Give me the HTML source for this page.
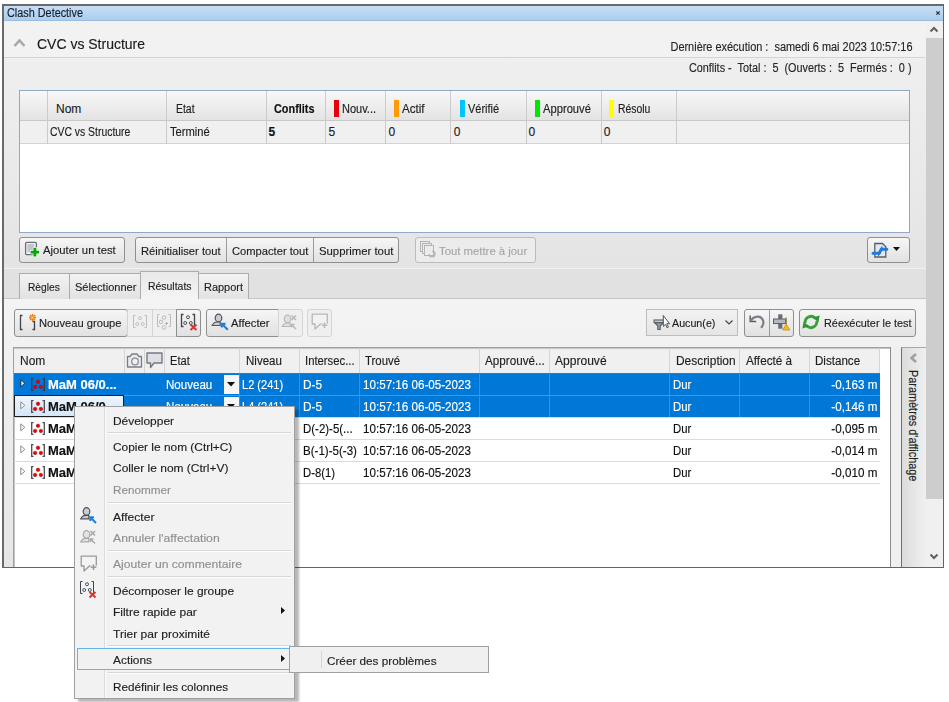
<!DOCTYPE html>
<html><head><meta charset='utf-8'><style>
*{margin:0;padding:0;box-sizing:border-box}
html,body{width:949px;height:702px;overflow:hidden;background:#fff}
body{position:relative;font-family:"Liberation Sans",sans-serif}
.b{position:absolute}
.t{position:absolute;white-space:pre;line-height:16px;font-family:"Liberation Sans",sans-serif;-webkit-text-stroke:0.15px currentColor}
svg{position:absolute;overflow:visible}
</style></head><body>
<div class="b" style="left:2px;top:4px;width:942px;height:564px;background:#f0f0f0;"></div>
<div class="b" style="left:3px;top:21px;width:923px;height:37px;background:#f2f2f2;"></div>
<div class="b" style="left:3px;top:58px;width:923px;height:210px;background:linear-gradient(#efefef,#e9e9e9 60%,#e4e4e4);"></div>
<div class="b" style="left:3px;top:5px;width:940px;height:16px;background:linear-gradient(#c9e0f6,#abcdef);border-bottom:1px solid #9cbcdd;"></div>
<div class="t" style="top:5.34px;font-size:12px;color:#151f2b;left:7.4px;transform:scaleX(0.9043);transform-origin:0 0;">Clash Detective</div>
<svg style="left:936px;top:11px" width="4" height="4" viewBox="0 0 4 4"><path d="M0.3 0.3L3.7 3.7M3.7 0.3L0.3 3.7" stroke="#333" stroke-width="1.2"/></svg>
<svg style="left:13px;top:37px" width="14" height="11" viewBox="0 0 14 11"><path d="M1.5 9L6.5 3.5L11.5 9" fill="none" stroke="#a8a8a8" stroke-width="2.6"/></svg>
<div class="t" style="top:35.80px;font-size:15px;color:#1a1a1a;left:37px;transform:scaleX(0.9320);transform-origin:0 0;">CVC vs Structure</div>
<div class="b" style="left:3px;top:57px;width:922px;height:1px;background:#d4d4d4;"></div>
<div class="t" style="top:38.64px;font-size:12px;color:#262626;left:646.50px;transform:scaleX(0.9115);transform-origin:100% 0;">Dernière exécution :  samedi 6 mai 2023 10:57:16</div>
<div class="t" style="top:59.64px;font-size:12px;color:#262626;left:665.48px;transform:scaleX(0.9030);transform-origin:100% 0;">Conflits -  Total :  5  (Ouverts :  5  Fermés :  0 )</div>
<div class="b" style="left:926px;top:21px;width:17px;height:546px;background:#f0f0f0;"></div>
<svg style="left:929px;top:25px" width="10" height="8" viewBox="0 0 10 8"><path d="M1.5 6.5L5 3L8.5 6.5" fill="none" stroke="#606060" stroke-width="2"/></svg>
<div class="b" style="left:926px;top:38px;width:17px;height:461px;background:#cdcdcd;"></div>
<svg style="left:929px;top:553px" width="10" height="8" viewBox="0 0 10 8"><path d="M1.5 1.5L5 5L8.5 1.5" fill="none" stroke="#606060" stroke-width="2"/></svg>
<div class="b" style="left:19px;top:90px;width:891px;height:143px;background:#fff;border:1px solid #8fa9c6;"></div>
<div class="b" style="left:20px;top:91px;width:889px;height:30px;background:linear-gradient(#f8f8f8,#e3e3e3);border-bottom:1px solid #c8c8c8;"></div>
<div class="b" style="left:20px;top:121px;width:889px;height:23px;background:#f0f0f0;border-bottom:1px solid #d4d4d4;"></div>
<div class="b" style="left:47px;top:91px;width:1px;height:53px;background:#cbcbcb;"></div>
<div class="b" style="left:166px;top:91px;width:1px;height:53px;background:#cbcbcb;"></div>
<div class="b" style="left:266px;top:91px;width:1px;height:53px;background:#cbcbcb;"></div>
<div class="b" style="left:325px;top:91px;width:1px;height:53px;background:#cbcbcb;"></div>
<div class="b" style="left:385px;top:91px;width:1px;height:53px;background:#cbcbcb;"></div>
<div class="b" style="left:450px;top:91px;width:1px;height:53px;background:#cbcbcb;"></div>
<div class="b" style="left:526px;top:91px;width:1px;height:53px;background:#cbcbcb;"></div>
<div class="b" style="left:601px;top:91px;width:1px;height:53px;background:#cbcbcb;"></div>
<div class="b" style="left:676px;top:91px;width:1px;height:53px;background:#cbcbcb;"></div>
<div class="t" style="top:100.84px;font-size:12px;color:#1e1e1e;left:56px;transform:scaleX(1.0000);transform-origin:0 0;">Nom</div>
<div class="t" style="top:100.84px;font-size:12px;color:#1e1e1e;left:175.5px;transform:scaleX(0.8708);transform-origin:0 0;">Etat</div>
<div class="t" style="top:100.84px;font-size:12px;color:#111;font-weight:700;left:274.3px;transform:scaleX(0.9066);transform-origin:0 0;">Conflits</div>
<div class="b" style="left:334px;top:100px;width:5px;height:17px;background:#e8000b;"></div>
<div class="t" style="top:100.84px;font-size:12px;color:#1e1e1e;left:342.3px;transform:scaleX(0.9158);transform-origin:0 0;">Nouv...</div>
<div class="b" style="left:394px;top:100px;width:5px;height:17px;background:#ff9b00;"></div>
<div class="t" style="top:100.84px;font-size:12px;color:#1e1e1e;left:402.3px;transform:scaleX(0.9681);transform-origin:0 0;">Actif</div>
<div class="b" style="left:459.7px;top:100px;width:5px;height:17px;background:#00c4ff;"></div>
<div class="t" style="top:100.84px;font-size:12px;color:#1e1e1e;left:468.0px;transform:scaleX(0.9113);transform-origin:0 0;">Vérifié</div>
<div class="b" style="left:534.5px;top:100px;width:5px;height:17px;background:#00e600;"></div>
<div class="t" style="top:100.84px;font-size:12px;color:#1e1e1e;left:542.8px;transform:scaleX(0.9324);transform-origin:0 0;">Approuvé</div>
<div class="b" style="left:609.4px;top:100px;width:5px;height:17px;background:#ffff00;"></div>
<div class="t" style="top:100.84px;font-size:12px;color:#1e1e1e;left:617.6999999999999px;transform:scaleX(0.8646);transform-origin:0 0;">Résolu</div>
<div class="t" style="top:123.84px;font-size:12px;color:#1e1e1e;left:50px;transform:scaleX(0.8662);transform-origin:0 0;">CVC vs Structure</div>
<div class="t" style="top:123.84px;font-size:12px;color:#1e1e1e;left:169.6px;transform:scaleX(0.9324);transform-origin:0 0;">Terminé</div>
<div class="t" style="top:123.84px;font-size:12px;color:#111;font-weight:700;left:268.6px;transform:scaleX(1.0000);transform-origin:0 0;">5</div>
<div class="t" style="top:123.84px;font-size:12px;color:#1e1e1e;left:328.5px;transform:scaleX(1.0000);transform-origin:0 0;">5</div>
<div class="t" style="top:123.84px;font-size:12px;color:#1e1e1e;left:388.4px;transform:scaleX(1.0000);transform-origin:0 0;">0</div>
<div class="t" style="top:123.84px;font-size:12px;color:#1e1e1e;left:453.8px;transform:scaleX(1.0000);transform-origin:0 0;">0</div>
<div class="t" style="top:123.84px;font-size:12px;color:#1e1e1e;left:528.6px;transform:scaleX(1.0000);transform-origin:0 0;">0</div>
<div class="t" style="top:123.84px;font-size:12px;color:#1e1e1e;left:603.7px;transform:scaleX(1.0000);transform-origin:0 0;">0</div>
<div class="b" style="left:19px;top:237px;width:106px;height:26px;background:linear-gradient(#f6f6f6,#e1e1e1);border:1px solid #8f8f8f;border-radius:3px;"></div>
<svg style="left:24px;top:241px" width="18" height="18" viewBox="0 0 18 18"><rect x="1.6" y="1.3" width="10.8" height="12.4" rx="1.2" fill="#eef0f4" stroke="#6a7078" stroke-width="1.3"/><path d="M3.5 4H10M3.5 6H10M3.5 8H9M3.5 10H7" stroke="#8a9098" stroke-width="0.9"/><path d="M10.9 6.3V15.9M6.1 11.1H15.7" stroke="#ffffff" stroke-width="4.2"/><path d="M10.9 6.8V15.4M6.6 11.1H15.2" stroke="#00a800" stroke-width="2.9"/></svg>
<div class="t" style="top:242.32px;font-size:11.5px;color:#1e1e1e;left:43px;transform:scaleX(0.9804);transform-origin:0 0;">Ajouter un test</div>
<div class="b" style="left:135px;top:237px;width:264px;height:26px;background:linear-gradient(#f6f6f6,#e1e1e1);border:1px solid #8f8f8f;border-radius:3px;"></div>
<div class="b" style="left:226px;top:238px;width:1px;height:24px;background:#9a9a9a;"></div>
<div class="b" style="left:313px;top:238px;width:1px;height:24px;background:#9a9a9a;"></div>
<div class="t" style="top:242.52px;font-size:11.5px;color:#1e1e1e;left:140.6px;transform:scaleX(0.9728);transform-origin:0 0;">Réinitialiser tout</div>
<div class="t" style="top:242.52px;font-size:11.5px;color:#1e1e1e;left:231.5px;transform:scaleX(0.9717);transform-origin:0 0;">Compacter tout</div>
<div class="t" style="top:242.52px;font-size:11.5px;color:#1e1e1e;left:319.1px;transform:scaleX(0.9862);transform-origin:0 0;">Supprimer tout</div>
<div class="b" style="left:415px;top:237px;width:121px;height:26px;background:#ececec;border:1px solid #bcbcbc;border-radius:3px;"></div>
<svg style="left:420px;top:241px" width="16" height="16" viewBox="0 0 16 16"><g fill="#ececec" stroke="#b4b4b4"><rect x="0.5" y="0.5" width="9" height="10"/><rect x="2.5" y="2.5" width="9" height="10"/><rect x="4.5" y="4.5" width="9" height="10"/></g><path d="M9 13a3 3 0 1 0 3-3" fill="none" stroke="#b0b0b0" stroke-width="1.2"/></svg>
<div class="t" style="top:242.52px;font-size:11.5px;color:#a6a6a6;left:439.4px;transform:scaleX(0.9856);transform-origin:0 0;">Tout mettre à jour</div>
<div class="b" style="left:867px;top:237px;width:43px;height:26px;background:linear-gradient(#f6f6f6,#e1e1e1);border:1px solid #8f8f8f;border-radius:3px;"></div>
<svg style="left:871px;top:242px" width="18" height="17" viewBox="0 0 18 17"><path d="M3.8 1.5H11.5L14.8 4.8V15H3.8Z" fill="#e4e8ee" stroke="#5a5e64" stroke-width="1.3"/><path d="M2 11.2H8L10.5 7.2H15.8" stroke="#1f7ae0" stroke-width="3" fill="none" stroke-linecap="round" stroke-linejoin="round"/><path d="M8.2 7.5L11.2 3.8L11.8 8.6Z M10.3 10.9L7.3 14.6L6.7 9.8Z" fill="#1f7ae0"/></svg>
<svg style="left:893px;top:247px" width="8" height="5" viewBox="0 0 8 5"><path d="M0 0H7L3.5 4Z" fill="#111"/></svg>
<div class="b" style="left:3px;top:268px;width:923px;height:31px;background:#e1e1e1;border-top:1px solid #f2f2f2;"></div>
<div class="b" style="left:3px;top:298px;width:923px;height:1px;background:#c6c6c6;"></div>
<div class="b" style="left:19px;top:273px;width:51px;height:26px;background:linear-gradient(#f2f2f2,#e2e2e2);border:1px solid #acacac;border-bottom:none;"></div>
<div class="b" style="left:69px;top:273px;width:72px;height:26px;background:linear-gradient(#f2f2f2,#e2e2e2);border:1px solid #acacac;border-bottom:none;"></div>
<div class="b" style="left:198px;top:273px;width:51px;height:26px;background:linear-gradient(#f2f2f2,#e2e2e2);border:1px solid #acacac;border-bottom:none;"></div>
<div class="b" style="left:140px;top:271px;width:59px;height:28px;background:linear-gradient(#e9e9e9,#f4f4f4);border:1px solid #acacac;border-bottom:none;"></div>
<div class="t" style="top:279.02px;font-size:11.5px;color:#1e1e1e;left:28px;transform:scaleX(0.8880);transform-origin:0 0;">Règles</div>
<div class="t" style="top:279.02px;font-size:11.5px;color:#1e1e1e;left:74.5px;transform:scaleX(0.9603);transform-origin:0 0;">Sélectionner</div>
<div class="t" style="top:278.02px;font-size:11.5px;color:#1e1e1e;left:148.3px;transform:scaleX(0.9074);transform-origin:0 0;">Résultats</div>
<div class="t" style="top:279.02px;font-size:11.5px;color:#1e1e1e;left:203.6px;transform:scaleX(0.9530);transform-origin:0 0;">Rapport</div>
<div class="b" style="left:3px;top:299px;width:923px;height:268px;background:linear-gradient(#f4f4f4,#ececec 50%,#e6e6e6);"></div>
<div class="b" style="left:14px;top:309px;width:114px;height:28px;background:linear-gradient(#f6f6f6,#e1e1e1);border:1px solid #8f8f8f;border-radius:3px;"></div>
<svg style="left:19px;top:313px" width="18" height="19" viewBox="0 0 18 19"><path d="M3.5 2.5H1.5V16.5H3.5" fill="none" stroke="#3c4450" stroke-width="1.3"/><path d="M13.5 8.5H15.5V16.5H13.5" fill="none" stroke="#3c4450" stroke-width="1.3"/><g stroke="#f07818" stroke-width="1.4"><path d="M13.5 1V8M10 4.5H17M11 2L16 7M16 2L11 7"/></g><circle cx="13.5" cy="4.5" r="1.3" fill="#ffd040"/></svg>
<div class="t" style="top:315.02px;font-size:11.5px;color:#1e1e1e;left:39.1px;transform:scaleX(0.9701);transform-origin:0 0;">Nouveau groupe</div>
<div class="b" style="left:127px;top:309px;width:26px;height:28px;background:#efefef;border:1px solid #d4d4d4;"></div>
<div class="b" style="left:152px;top:309px;width:25px;height:28px;background:#efefef;border:1px solid #d4d4d4;"></div>
<svg style="left:133px;top:315px" width="14" height="13" viewBox="0 0 14 13"><path d="M2.5 0.5H0.5V12.5H2.5M11.5 0.5H13.5V12.5H11.5" fill="none" stroke="#bdbdbd"/><g fill="none" stroke="#bdbdbd" stroke-width="0.9"><circle cx="7" cy="3.2" r="1.5"/><circle cx="4.2" cy="9" r="1.5"/><circle cx="9.8" cy="9" r="1.5"/></g></svg>
<svg style="left:157px;top:314px" width="14" height="16" viewBox="0 0 14 16"><path d="M2.5 0.5H0.5V12.5H2.5M11.5 0.5H13.5V12.5H11.5" fill="none" stroke="#bdbdbd"/><g fill="none" stroke="#bdbdbd"><circle cx="7" cy="3.5" r="1.8"/><circle cx="4" cy="8" r="1.8"/><circle cx="7" cy="13.5" r="1.8"/></g><path d="M9.5 8V11M8 9.5H11" stroke="#b0b0b0"/></svg>
<div class="b" style="left:176px;top:309px;width:25px;height:28px;background:linear-gradient(#f6f6f6,#e1e1e1);border:1px solid #8f8f8f;border-radius:3px;border-radius:0 3px 3px 0;"></div>
<svg style="left:181px;top:314px" width="17" height="17" viewBox="0 0 17 17"><path d="M2.5 0.5H0.5V12.5H2.5M11.5 0.5H13.5V12.5H11.5" fill="none" stroke="#3c4450" stroke-width="1.3"/><g fill="none" stroke="#3c4450" stroke-width="0.9"><circle cx="7" cy="3.2" r="1.5"/><circle cx="4.2" cy="9" r="1.5"/><circle cx="9.8" cy="9" r="1.5"/></g><path d="M9.5 10.5L15.5 16M15.5 10.5L9.5 16" stroke="#e03030" stroke-width="2"/></svg>
<div class="b" style="left:206px;top:309px;width:73px;height:28px;background:linear-gradient(#f6f6f6,#e1e1e1);border:1px solid #8f8f8f;border-radius:3px;border-radius:3px 0 0 3px;"></div>
<svg style="left:211px;top:313px" width="19" height="18" viewBox="0 0 19 18"><ellipse cx="7.5" cy="5" rx="3.3" ry="3.8" fill="#c8ccd4" stroke="#50545c" stroke-width="1.2"/><path d="M1.2 12.5q1.5-3.5 5-3.5h3v3.5Z" fill="#c8ccd4" stroke="#50545c" stroke-width="1.2"/><path d="M10.8 14.5V10.8H14.5M10.8 10.8L16.8 16.8" fill="none" stroke="#2080e0" stroke-width="2.2"/></svg>
<div class="t" style="top:315.02px;font-size:11.5px;color:#1e1e1e;left:231.3px;transform:scaleX(0.9766);transform-origin:0 0;">Affecter</div>
<div class="b" style="left:278px;top:309px;width:25px;height:28px;background:#efefef;border:1px solid #d4d4d4;border-radius:0 3px 3px 0;"></div>
<svg style="left:281px;top:314px" width="18" height="18" viewBox="0 0 18 18"><ellipse cx="6.5" cy="5" rx="3.3" ry="3.8" fill="#e0e0e0" stroke="#b8b8b8" stroke-width="1.2"/><path d="M1.2 12.5q1.5-3.5 5-3.5h3v3.5Z" fill="#e0e0e0" stroke="#b8b8b8" stroke-width="1.2"/><path d="M10.5 1.5L15 6M15 1.5L10.5 6" stroke="#b8b8b8" stroke-width="1.6"/><path d="M10.5 13.5V10.5H13.5M10.5 10.5L15 15" fill="none" stroke="#b8b8b8" stroke-width="1.5"/></svg>
<div class="b" style="left:307px;top:309px;width:25px;height:28px;background:#efefef;border:1px solid #d4d4d4;border-radius:3px;"></div>
<svg style="left:311px;top:313px" width="18" height="18" viewBox="0 0 18 18"><path d="M1.2 1.2H16.3V11H9.5L4 16V11H1.2Z" fill="#f2f2f2" stroke="#b8b8b8" stroke-width="1.3" stroke-linejoin="round"/><path d="M13.5 9V15.5M10.2 12.2H16.8" stroke="#f3f3f3" stroke-width="3.5"/><path d="M13.5 9.5V15M10.7 12.2H16.3" stroke="#b8b8b8" stroke-width="1.6"/></svg>
<div class="b" style="left:646px;top:309px;width:92px;height:27px;background:linear-gradient(#f2f2f2,#e5e5e5);border:1px solid #bdbdbd;"></div>
<svg style="left:653px;top:315px" width="18" height="16" viewBox="0 0 18 16"><path d="M1.6 7.6H10.4L7.2 11V14.5H4.8V11Z" fill="#9ca2aa" stroke="#5a5e64" stroke-width="1.1" stroke-linejoin="round"/><rect x="1.1" y="5" width="9.8" height="2.6" fill="#c8ccd2" stroke="#5a5e64" stroke-width="1.1"/><path d="M10.3 0.5V11.3L12.5 9.3L14.1 12.8L15.4 12.1L13.8 8.7H16.6Z" fill="#fff" stroke="#404448" stroke-width="0.9" stroke-linejoin="round"/></svg>
<div class="t" style="top:315.02px;font-size:11.5px;color:#1e1e1e;left:672px;transform:scaleX(0.9299);transform-origin:0 0;">Aucun(e)</div>
<svg style="left:725px;top:320px" width="8" height="5" viewBox="0 0 8 5"><path d="M0.5 0.5L4 4L7.5 0.5" fill="none" stroke="#444" stroke-width="1.1"/></svg>
<div class="b" style="left:744px;top:309px;width:50px;height:28px;background:linear-gradient(#f6f6f6,#e1e1e1);border:1px solid #8f8f8f;border-radius:3px;"></div>
<div class="b" style="left:769px;top:310px;width:1px;height:26px;background:#9a9a9a;"></div>
<svg style="left:748px;top:313px" width="18" height="16" viewBox="0 0 18 16"><path d="M2.2 2.5V8.5H8.2" fill="none" stroke="#5a6068" stroke-width="1.5"/><path d="M2.6 8.2C5 3.2 12 2 14.6 6.5C16.2 9.5 15 13 13 14.8" fill="none" stroke="#787e86" stroke-width="2.2"/></svg>
<svg style="left:772px;top:313px" width="19" height="18" viewBox="0 0 19 18"><rect x="6.2" y="1.3" width="4.2" height="14.4" fill="#686e76"/><rect x="1.5" y="6" width="12" height="4.6" fill="#b4b8be" stroke="#585e66"/><path d="M14.2 4.5V11" stroke="#a08040" stroke-width="1.3"/><path d="M10.6 17L14.2 11L17.8 17Z" fill="#f2bc20" stroke="#c89000" stroke-width="0.8"/></svg>
<div class="b" style="left:799px;top:309px;width:117px;height:28px;background:linear-gradient(#f6f6f6,#e1e1e1);border:1px solid #8f8f8f;border-radius:3px;"></div>
<svg style="left:802px;top:314px" width="18" height="16" viewBox="0 0 18 16"><g fill="none" stroke="#38a038" stroke-width="2.8"><path d="M3.3 9A5.8 5.8 0 0 1 13.6 4.6"/><path d="M14.7 7A5.8 5.8 0 0 1 4.4 11.4"/></g><path d="M11 3.6L17.6 1.6L16.4 8.6Z M7 12.4L0.4 14.4L1.6 7.4Z" fill="#2e962e"/></svg>
<div class="t" style="top:315.02px;font-size:11.5px;color:#1e1e1e;left:824.2px;transform:scaleX(0.9440);transform-origin:0 0;">Réexécuter le test</div>
<div class="b" style="left:13px;top:347px;width:878px;height:221px;background:#fff;border-left:1px solid #a0a0a0;border-top:1px solid #a0a0a0;border-right:1px solid #8c8c8c;box-shadow:inset 1px 1px 0 #c4c4c4;"></div>
<div class="b" style="left:14px;top:348px;width:866px;height:25px;background:#f0f0f0;border-top:1px solid #c8c8c8;"></div>
<div class="b" style="left:124px;top:348px;width:1px;height:25px;background:#d5d5d5;"></div>
<div class="b" style="left:144px;top:348px;width:1px;height:25px;background:#d5d5d5;"></div>
<div class="b" style="left:164px;top:348px;width:1px;height:25px;background:#d5d5d5;"></div>
<div class="b" style="left:239px;top:348px;width:1px;height:25px;background:#d5d5d5;"></div>
<div class="b" style="left:299px;top:348px;width:1px;height:25px;background:#d5d5d5;"></div>
<div class="b" style="left:359px;top:348px;width:1px;height:25px;background:#d5d5d5;"></div>
<div class="b" style="left:479px;top:348px;width:1px;height:25px;background:#d5d5d5;"></div>
<div class="b" style="left:549px;top:348px;width:1px;height:25px;background:#d5d5d5;"></div>
<div class="b" style="left:669px;top:348px;width:1px;height:25px;background:#d5d5d5;"></div>
<div class="b" style="left:739px;top:348px;width:1px;height:25px;background:#d5d5d5;"></div>
<div class="b" style="left:809px;top:348px;width:1px;height:25px;background:#d5d5d5;"></div>
<div class="b" style="left:879px;top:348px;width:1px;height:25px;background:#d5d5d5;"></div>
<svg style="left:126px;top:352px" width="18" height="17" viewBox="0 0 18 17"><path d="M1.5 4.5H4L6 2H11L13 4.5H15.5V15H1.5Z" fill="#e8eaec" stroke="#7a7e84" stroke-width="1.3" stroke-linejoin="round"/><circle cx="9" cy="9.5" r="3.3" fill="#eef2f2" stroke="#8a8e94" stroke-width="1.3"/></svg>
<svg style="left:146px;top:352px" width="18" height="17" viewBox="0 0 18 17"><path d="M1 1H16V11H8L4.5 15.5V11H1Z" fill="#dde0e6" stroke="#75797f" stroke-width="1.4" stroke-linejoin="round"/></svg>
<div class="t" style="top:352.84px;font-size:12px;color:#1e1e1e;left:20.2px;transform:scaleX(0.9983);transform-origin:0 0;">Nom</div>
<div class="t" style="top:352.84px;font-size:12px;color:#1e1e1e;left:170.2px;transform:scaleX(0.9270);transform-origin:0 0;">Etat</div>
<div class="t" style="top:352.84px;font-size:12px;color:#1e1e1e;left:245.6px;transform:scaleX(0.9609);transform-origin:0 0;">Niveau</div>
<div class="t" style="top:352.84px;font-size:12px;color:#1e1e1e;left:305.3px;transform:scaleX(0.9414);transform-origin:0 0;">Intersec...</div>
<div class="t" style="top:352.84px;font-size:12px;color:#1e1e1e;left:365px;transform:scaleX(0.9483);transform-origin:0 0;">Trouvé</div>
<div class="t" style="top:352.84px;font-size:12px;color:#1e1e1e;left:485.4px;transform:scaleX(0.9727);transform-origin:0 0;">Approuvé...</div>
<div class="t" style="top:352.84px;font-size:12px;color:#1e1e1e;left:555.2px;transform:scaleX(1.0044);transform-origin:0 0;">Approuvé</div>
<div class="t" style="top:352.84px;font-size:12px;color:#1e1e1e;left:675.5px;transform:scaleX(0.9928);transform-origin:0 0;">Description</div>
<div class="t" style="top:352.84px;font-size:12px;color:#1e1e1e;left:745.5px;transform:scaleX(0.9776);transform-origin:0 0;">Affecté à</div>
<div class="t" style="top:352.84px;font-size:12px;color:#1e1e1e;left:815.1px;transform:scaleX(0.9660);transform-origin:0 0;">Distance</div>
<div class="b" style="left:14px;top:373px;width:866px;height:22px;background:#0078d7;"></div>
<div class="b" style="left:239px;top:373px;width:1px;height:22px;background:#3393df;"></div>
<div class="b" style="left:299px;top:373px;width:1px;height:22px;background:#3393df;"></div>
<div class="b" style="left:359px;top:373px;width:1px;height:22px;background:#3393df;"></div>
<div class="b" style="left:479px;top:373px;width:1px;height:22px;background:#3393df;"></div>
<div class="b" style="left:549px;top:373px;width:1px;height:22px;background:#3393df;"></div>
<div class="b" style="left:669px;top:373px;width:1px;height:22px;background:#3393df;"></div>
<div class="b" style="left:739px;top:373px;width:1px;height:22px;background:#3393df;"></div>
<div class="b" style="left:809px;top:373px;width:1px;height:22px;background:#3393df;"></div>
<div class="b" style="left:14px;top:373px;width:866px;height:1px;background:#3d76b0;"></div>
<svg style="left:20px;top:379px" width="6" height="9" viewBox="0 0 6 9"><path d="M0.9 0.6V7.9L4.6 4.25Z" fill="#fafafa" stroke="#1a1a1a" stroke-width="0.9" stroke-linejoin="round"/></svg>
<svg style="left:31px;top:378px" width="14" height="13" viewBox="0 0 14 13"><path d="M2.5 0.7H0.7V12.3H2.5M11.5 0.7H13.3V12.3H11.5" fill="none" stroke="#2a3e56" stroke-width="1.3"/><g fill="#f00000" stroke="#a00000" stroke-width="0.5"><circle cx="7" cy="3.8" r="1.75"/><circle cx="4.1" cy="8.9" r="1.75"/><circle cx="9.9" cy="8.9" r="1.75"/></g></svg>
<div class="t" style="top:376.84px;font-size:12px;color:#fff;font-weight:700;left:48.4px;transform:scaleX(1.0827);transform-origin:0 0;">MaM 06/0...</div>
<div class="t" style="top:376.84px;font-size:12px;color:#fff;left:165.7px;transform:scaleX(0.9636);transform-origin:0 0;">Nouveau</div>
<div class="b" style="left:224px;top:375px;width:15px;height:19px;background:#f6f6f6;"></div>
<svg style="left:227px;top:382px" width="9" height="5" viewBox="0 0 9 5"><path d="M0 0H8L4 4.5Z" fill="#111"/></svg>
<div class="t" style="top:376.84px;font-size:12px;color:#fff;left:242.3px;transform:scaleX(0.9216);transform-origin:0 0;">L2 (241)</div>
<div class="t" style="top:376.84px;font-size:12px;color:#fff;left:302.6px;transform:scaleX(0.9822);transform-origin:0 0;">D-5</div>
<div class="t" style="top:376.84px;font-size:12px;color:#fff;left:363.2px;transform:scaleX(0.9692);transform-origin:0 0;">10:57:16 06-05-2023</div>
<div class="t" style="top:376.84px;font-size:12px;color:#fff;left:672.7px;transform:scaleX(0.9460);transform-origin:0 0;">Dur</div>
<div class="t" style="top:376.84px;font-size:12px;color:#fff;left:829.84px;transform:scaleX(0.9713);transform-origin:100% 0;">-0,163 m</div>
<div class="b" style="left:14px;top:395px;width:866px;height:22px;background:#0078d7;"></div>
<div class="b" style="left:239px;top:395px;width:1px;height:22px;background:#3393df;"></div>
<div class="b" style="left:299px;top:395px;width:1px;height:22px;background:#3393df;"></div>
<div class="b" style="left:359px;top:395px;width:1px;height:22px;background:#3393df;"></div>
<div class="b" style="left:479px;top:395px;width:1px;height:22px;background:#3393df;"></div>
<div class="b" style="left:549px;top:395px;width:1px;height:22px;background:#3393df;"></div>
<div class="b" style="left:669px;top:395px;width:1px;height:22px;background:#3393df;"></div>
<div class="b" style="left:739px;top:395px;width:1px;height:22px;background:#3393df;"></div>
<div class="b" style="left:809px;top:395px;width:1px;height:22px;background:#3393df;"></div>
<div class="b" style="left:14px;top:395px;width:866px;height:1px;background:#5a92c8;"></div>
<div class="b" style="left:14px;top:395px;width:110px;height:22px;background:linear-gradient(#eef5fc,#d3e6f8);border:1px solid #1c1c1c;"></div>
<svg style="left:20px;top:401px" width="6" height="9" viewBox="0 0 6 9"><path d="M0.8 0.8V7.8L4.8 4.3Z" fill="#fff" stroke="#8a8a8a" stroke-width="1"/></svg>
<svg style="left:31px;top:400px" width="14" height="13" viewBox="0 0 14 13"><path d="M2.5 0.7H0.7V12.3H2.5M11.5 0.7H13.3V12.3H11.5" fill="none" stroke="#4a4e56" stroke-width="1.3"/><g fill="#f00000" stroke="#a00000" stroke-width="0.5"><circle cx="7" cy="3.8" r="1.75"/><circle cx="4.1" cy="8.9" r="1.75"/><circle cx="9.9" cy="8.9" r="1.75"/></g></svg>
<div class="t" style="top:398.84px;font-size:12px;color:#111;font-weight:700;left:48.4px;transform:scaleX(1.0827);transform-origin:0 0;">MaM 06/0...</div>
<div class="t" style="top:398.84px;font-size:12px;color:#fff;left:165.7px;transform:scaleX(0.9636);transform-origin:0 0;">Nouveau</div>
<div class="b" style="left:224px;top:397px;width:15px;height:19px;background:#f6f6f6;"></div>
<svg style="left:227px;top:404px" width="9" height="5" viewBox="0 0 9 5"><path d="M0 0H8L4 4.5Z" fill="#111"/></svg>
<div class="t" style="top:398.84px;font-size:12px;color:#fff;left:242.3px;transform:scaleX(0.9216);transform-origin:0 0;">L4 (241)</div>
<div class="t" style="top:398.84px;font-size:12px;color:#fff;left:302.6px;transform:scaleX(0.9822);transform-origin:0 0;">D-5</div>
<div class="t" style="top:398.84px;font-size:12px;color:#fff;left:363.2px;transform:scaleX(0.9692);transform-origin:0 0;">10:57:16 06-05-2023</div>
<div class="t" style="top:398.84px;font-size:12px;color:#fff;left:672.7px;transform:scaleX(0.9460);transform-origin:0 0;">Dur</div>
<div class="t" style="top:398.84px;font-size:12px;color:#fff;left:829.84px;transform:scaleX(0.9713);transform-origin:100% 0;">-0,146 m</div>
<div class="b" style="left:14px;top:417px;width:866px;height:1px;background:#dcdcdc;"></div>
<svg style="left:20px;top:423px" width="6" height="9" viewBox="0 0 6 9"><path d="M0.8 0.8V7.8L4.8 4.3Z" fill="#fff" stroke="#8a8a8a" stroke-width="1"/></svg>
<svg style="left:31px;top:422px" width="14" height="13" viewBox="0 0 14 13"><path d="M2.5 0.7H0.7V12.3H2.5M11.5 0.7H13.3V12.3H11.5" fill="none" stroke="#4a4e56" stroke-width="1.3"/><g fill="#f00000" stroke="#a00000" stroke-width="0.5"><circle cx="7" cy="3.8" r="1.75"/><circle cx="4.1" cy="8.9" r="1.75"/><circle cx="9.9" cy="8.9" r="1.75"/></g></svg>
<div class="t" style="top:420.84px;font-size:12px;color:#111;font-weight:700;left:48.4px;transform:scaleX(1.0827);transform-origin:0 0;">MaM 06/0...</div>
<div class="t" style="top:420.84px;font-size:12px;color:#111;left:302.6px;transform:scaleX(0.9538);transform-origin:0 0;">D(-2)-5(...</div>
<div class="t" style="top:420.84px;font-size:12px;color:#111;left:363.2px;transform:scaleX(0.9692);transform-origin:0 0;">10:57:16 06-05-2023</div>
<div class="t" style="top:420.84px;font-size:12px;color:#111;left:672.7px;transform:scaleX(0.9460);transform-origin:0 0;">Dur</div>
<div class="t" style="top:420.84px;font-size:12px;color:#111;left:829.84px;transform:scaleX(0.9713);transform-origin:100% 0;">-0,095 m</div>
<div class="b" style="left:14px;top:439px;width:866px;height:1px;background:#dcdcdc;"></div>
<svg style="left:20px;top:445px" width="6" height="9" viewBox="0 0 6 9"><path d="M0.8 0.8V7.8L4.8 4.3Z" fill="#fff" stroke="#8a8a8a" stroke-width="1"/></svg>
<svg style="left:31px;top:444px" width="14" height="13" viewBox="0 0 14 13"><path d="M2.5 0.7H0.7V12.3H2.5M11.5 0.7H13.3V12.3H11.5" fill="none" stroke="#4a4e56" stroke-width="1.3"/><g fill="#f00000" stroke="#a00000" stroke-width="0.5"><circle cx="7" cy="3.8" r="1.75"/><circle cx="4.1" cy="8.9" r="1.75"/><circle cx="9.9" cy="8.9" r="1.75"/></g></svg>
<div class="t" style="top:442.84px;font-size:12px;color:#111;font-weight:700;left:48.4px;transform:scaleX(1.0827);transform-origin:0 0;">MaM 06/0...</div>
<div class="t" style="top:442.84px;font-size:12px;color:#111;left:302.6px;transform:scaleX(0.9625);transform-origin:0 0;">B(-1)-5(-3)</div>
<div class="t" style="top:442.84px;font-size:12px;color:#111;left:363.2px;transform:scaleX(0.9692);transform-origin:0 0;">10:57:16 06-05-2023</div>
<div class="t" style="top:442.84px;font-size:12px;color:#111;left:672.7px;transform:scaleX(0.9460);transform-origin:0 0;">Dur</div>
<div class="t" style="top:442.84px;font-size:12px;color:#111;left:829.84px;transform:scaleX(0.9713);transform-origin:100% 0;">-0,014 m</div>
<div class="b" style="left:14px;top:461px;width:866px;height:1px;background:#dcdcdc;"></div>
<div class="b" style="left:14px;top:483px;width:866px;height:1px;background:#dcdcdc;"></div>
<svg style="left:20px;top:467px" width="6" height="9" viewBox="0 0 6 9"><path d="M0.8 0.8V7.8L4.8 4.3Z" fill="#fff" stroke="#8a8a8a" stroke-width="1"/></svg>
<svg style="left:31px;top:466px" width="14" height="13" viewBox="0 0 14 13"><path d="M2.5 0.7H0.7V12.3H2.5M11.5 0.7H13.3V12.3H11.5" fill="none" stroke="#4a4e56" stroke-width="1.3"/><g fill="#f00000" stroke="#a00000" stroke-width="0.5"><circle cx="7" cy="3.8" r="1.75"/><circle cx="4.1" cy="8.9" r="1.75"/><circle cx="9.9" cy="8.9" r="1.75"/></g></svg>
<div class="t" style="top:464.84px;font-size:12px;color:#111;font-weight:700;left:48.4px;transform:scaleX(1.0827);transform-origin:0 0;">MaM 06/0...</div>
<div class="t" style="top:464.84px;font-size:12px;color:#111;left:302.6px;transform:scaleX(0.9407);transform-origin:0 0;">D-8(1)</div>
<div class="t" style="top:464.84px;font-size:12px;color:#111;left:363.2px;transform:scaleX(0.9692);transform-origin:0 0;">10:57:16 06-05-2023</div>
<div class="t" style="top:464.84px;font-size:12px;color:#111;left:672.7px;transform:scaleX(0.9460);transform-origin:0 0;">Dur</div>
<div class="t" style="top:464.84px;font-size:12px;color:#111;left:829.84px;transform:scaleX(0.9713);transform-origin:100% 0;">-0,010 m</div>
<div class="b" style="left:891px;top:347px;width:10px;height:221px;background:#f0f0f0;"></div>
<div class="b" style="left:901px;top:347px;width:25px;height:221px;background:linear-gradient(90deg,#dcdcdc,#f0f0f0);border-left:1px solid #707070;border-top:1px solid #a8a8a8;"></div>
<svg style="left:909px;top:353px" width="9" height="11" viewBox="0 0 9 11"><path d="M7 1L2.5 5L7 9" fill="none" stroke="#a0a0a0" stroke-width="2.6"/></svg>
<div class="t" style="top:-12.16px;font-size:12px;color:#1e1e1e;left:0px;transform:scaleX(0.9070);transform-origin:0 0;left:905px;top:354px;transform:rotate(90deg) scaleX(0.907);transform-origin:0 100%;">Paramètres d&#x27;affichage</div>
<div class="b" style="left:2px;top:4px;width:942px;height:564px;border:1px solid #646464;border-top:2px solid #6a6a6a;border-left:2px solid #6a6a6a;"></div>
<div class="b" style="left:78px;top:410px;width:221px;height:292px;background:rgba(0,0,0,0.28);filter:blur(1.2px);"></div>
<div class="b" style="left:74px;top:406px;width:221px;height:293px;background:#f2f2f2;border:1px solid #a0a0a0;"></div>
<div class="b" style="left:104px;top:407px;width:1px;height:291px;background:#dcdcdc;"></div>
<div class="b" style="left:105px;top:407px;width:1px;height:291px;background:#fafafa;"></div>
<div class="b" style="left:108px;top:432px;width:183px;height:1px;background:#d7d7d7;"></div>
<div class="b" style="left:108px;top:433px;width:183px;height:1px;background:#ffffff;"></div>
<div class="b" style="left:108px;top:502px;width:183px;height:1px;background:#d7d7d7;"></div>
<div class="b" style="left:108px;top:503px;width:183px;height:1px;background:#ffffff;"></div>
<div class="b" style="left:108px;top:550px;width:183px;height:1px;background:#d7d7d7;"></div>
<div class="b" style="left:108px;top:551px;width:183px;height:1px;background:#ffffff;"></div>
<div class="b" style="left:108px;top:576px;width:183px;height:1px;background:#d7d7d7;"></div>
<div class="b" style="left:108px;top:577px;width:183px;height:1px;background:#ffffff;"></div>
<div class="b" style="left:108px;top:645px;width:183px;height:1px;background:#d7d7d7;"></div>
<div class="b" style="left:108px;top:646px;width:183px;height:1px;background:#ffffff;"></div>
<div class="b" style="left:108px;top:672px;width:183px;height:1px;background:#d7d7d7;"></div>
<div class="b" style="left:108px;top:673px;width:183px;height:1px;background:#ffffff;"></div>
<div class="b" style="left:77px;top:648px;width:214px;height:22px;background:#f1f1f1;border:1px solid #62b6ea;"></div>
<div class="t" style="top:412.75px;font-size:11.7px;color:#1e1e1e;left:112.7px;transform:scaleX(1.0204);transform-origin:0 0;">Développer</div>
<div class="t" style="top:438.95px;font-size:11.7px;color:#1e1e1e;left:112.7px;transform:scaleX(1.0176);transform-origin:0 0;">Copier le nom (Ctrl+C)</div>
<div class="t" style="top:460.25px;font-size:11.7px;color:#1e1e1e;left:112.7px;transform:scaleX(1.0241);transform-origin:0 0;">Coller le nom (Ctrl+V)</div>
<div class="t" style="top:481.55px;font-size:11.7px;color:#8f8f8f;left:112.7px;transform:scaleX(1.0032);transform-origin:0 0;">Renommer</div>
<div class="t" style="top:508.55px;font-size:11.7px;color:#1e1e1e;left:112.7px;transform:scaleX(1.0334);transform-origin:0 0;">Affecter</div>
<div class="t" style="top:529.75px;font-size:11.7px;color:#8f8f8f;left:112.7px;transform:scaleX(1.0453);transform-origin:0 0;">Annuler l&#x27;affectation</div>
<div class="t" style="top:556.15px;font-size:11.7px;color:#8f8f8f;left:112.7px;transform:scaleX(1.0397);transform-origin:0 0;">Ajouter un commentaire</div>
<div class="t" style="top:582.55px;font-size:11.7px;color:#1e1e1e;left:112.7px;transform:scaleX(1.0249);transform-origin:0 0;">Décomposer le groupe</div>
<div class="t" style="top:604.25px;font-size:11.7px;color:#1e1e1e;left:112.7px;transform:scaleX(1.0237);transform-origin:0 0;">Filtre rapide par</div>
<div class="t" style="top:625.55px;font-size:11.7px;color:#1e1e1e;left:112.7px;transform:scaleX(1.0276);transform-origin:0 0;">Trier par proximité</div>
<div class="t" style="top:652.05px;font-size:11.7px;color:#1e1e1e;left:112.7px;transform:scaleX(1.0175);transform-origin:0 0;">Actions</div>
<div class="t" style="top:678.55px;font-size:11.7px;color:#1e1e1e;left:112.7px;transform:scaleX(1.0009);transform-origin:0 0;">Redéfinir les colonnes</div>
<svg style="left:281px;top:607px" width="5" height="8" viewBox="0 0 5 8"><path d="M0 0V7L4 3.5Z" fill="#111"/></svg>
<svg style="left:281px;top:655px" width="5" height="8" viewBox="0 0 5 8"><path d="M0 0V7L4 3.5Z" fill="#111"/></svg>
<svg style="left:80px;top:507px" width="18" height="18" viewBox="0 0 18 18"><ellipse cx="6.5" cy="4.5" rx="3.3" ry="3.8" fill="#c8ccd4" stroke="#50545c" stroke-width="1.2"/><path d="M0.8 11.8q1.5-3.5 5-3.5h3v3.5Z" fill="#c8ccd4" stroke="#50545c" stroke-width="1.2"/><path d="M10.3 14V10.3H14M10.3 10.3L16 16" fill="none" stroke="#2080e0" stroke-width="2"/></svg>
<svg style="left:80px;top:530px" width="18" height="16" viewBox="0 0 18 16"><ellipse cx="6.5" cy="4.5" rx="3.3" ry="3.8" fill="#e4e4e4" stroke="#a8a8a8" stroke-width="1.2"/><path d="M0.8 11.8q1.5-3.5 5-3.5h3v3.5Z" fill="#e4e4e4" stroke="#a8a8a8" stroke-width="1.2"/><path d="M10.5 1L15 5.5M15 1L10.5 5.5" stroke="#a8a8a8" stroke-width="1.6"/><path d="M10.5 12V9H13.5M10.5 9L15 13.5" fill="none" stroke="#a8a8a8" stroke-width="1.4"/></svg>
<svg style="left:80px;top:555px" width="18" height="18" viewBox="0 0 18 18"><path d="M1.2 1.2H16.3V11H9.5L4 16V11H1.2Z" fill="#f4f4f4" stroke="#9a9a9a" stroke-width="1.3" stroke-linejoin="round"/><path d="M13.5 9V15.5M10.2 12.2H16.8" stroke="#f3f3f3" stroke-width="3.5"/><path d="M13.5 9.5V15M10.7 12.2H16.3" stroke="#9a9a9a" stroke-width="1.6"/></svg>
<svg style="left:80px;top:581px" width="18" height="18" viewBox="0 0 18 18"><path d="M2.5 0.5H0.5V12.5H2.5M11.5 0.5H13.5V12.5H11.5" fill="none" stroke="#3c4450"/><g fill="none" stroke="#3c4450" stroke-width="0.9"><circle cx="7" cy="3.2" r="1.5"/><circle cx="4.2" cy="9" r="1.5"/><circle cx="9.8" cy="9" r="1.5"/></g><path d="M9.5 11L15.5 16.5M15.5 11L9.5 16.5" stroke="#e03030" stroke-width="2"/></svg>
<div class="b" style="left:289px;top:646px;width:200px;height:27px;background:#f0f0f0;border:1px solid #a0a0a0;"></div>
<div class="b" style="left:321px;top:651px;width:1px;height:17px;background:#d5d5d5;"></div>
<div class="t" style="top:653.25px;font-size:11.7px;color:#1e1e1e;left:326.5px;transform:scaleX(1.0033);transform-origin:0 0;">Créer des problèmes</div>
</body></html>
